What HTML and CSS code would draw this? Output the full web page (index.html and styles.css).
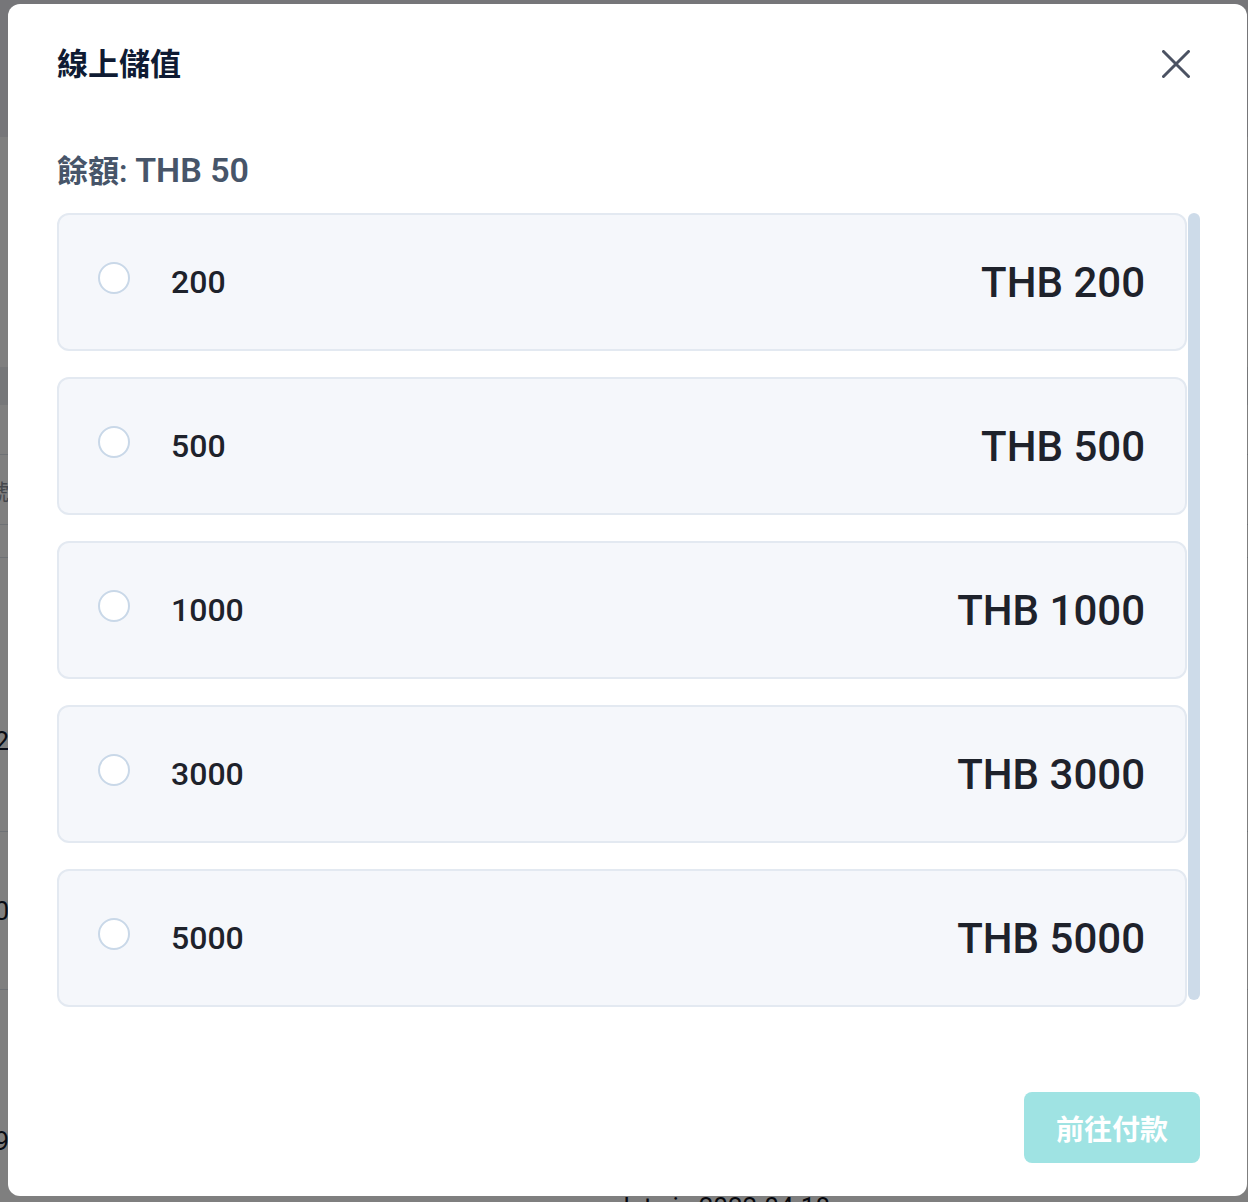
FILE: index.html
```html
<!DOCTYPE html>
<html lang="zh-Hant">
<head>
    <meta charset="UTF-8">
    <title>線上儲值</title>
    <link rel="stylesheet" href="styles.css">
</head>
<body>

<div class="page">
    <div class="page-header"></div>
    <div class="page-space"></div>
    <div class="table-head"></div>
    <div class="row row-filter"></div>
    <div class="row row-input"><span class="cell">號</span></div>
    <div class="row row-thin"></div>
    <div class="row row-a"><span class="cell">2</span></div>
    <div class="row row-b"><span class="cell">0</span></div>
    <div class="row row-c"><span class="cell">9</span></div>
    <div class="row-note">date is 2022-04-18</div>
</div>

<div class="mask"></div>

<div class="dialog">
    <div class="dialog-head">
        <h2>線上儲值</h2>
        <button class="close" type="button">
            <svg width="28" height="28" viewBox="0 0 28 28">
                <path d="M1.5 1.5 L26.5 26.5 M26.5 1.5 L1.5 26.5" stroke="#4b5262" stroke-width="3" stroke-linecap="round" fill="none"/>
            </svg>
        </button>
    </div>

    <div class="balance">餘額: <span class="amount">THB 50</span></div>

    <div class="options">
        <div class="option-list">
            <label class="option"><input type="radio" name="amount"><span class="num">200</span><span class="price">THB 200</span></label>
            <label class="option"><input type="radio" name="amount"><span class="num">500</span><span class="price">THB 500</span></label>
            <label class="option"><input type="radio" name="amount"><span class="num">1000</span><span class="price">THB 1000</span></label>
            <label class="option"><input type="radio" name="amount"><span class="num">3000</span><span class="price">THB 3000</span></label>
            <label class="option"><input type="radio" name="amount"><span class="num">5000</span><span class="price">THB 5000</span></label>
        </div>
        <div class="scrollbar"></div>
    </div>

    <div class="dialog-foot">
        <button class="pay" type="button" disabled>前往付款</button>
    </div>
</div>

</body>
</html>
```

FILE: styles.css
```css
* {
    box-sizing: border-box;
}

html, body {
    margin: 0;
    padding: 0;
}

body {
    width: 1248px;
    height: 1202px;
    overflow: hidden;
    background: #fff;
    font-family: Roboto, "Liberation Sans", "Noto Sans CJK TC", sans-serif;
}

/* page behind the dialog */
.page {
    display: flex;
    flex-direction: column;
}

.page-header {
    height: 137px;
    background: #ecedf3;
}

.page-space {
    height: 230px;
}

.table-head {
    height: 38px;
    background: #eceef2;
}

.row {
    display: flex;
    align-items: center;
    border-bottom: 1px solid #dde3ea;
}

.row .cell {
    width: 9px;
    display: flex;
    justify-content: flex-end;
    white-space: nowrap;
    font-size: 26px;
    color: #101728;
}

.row-filter { height: 50px; }
.row-input { height: 70px; }
.row-input .cell { color: #8a8f99; font-size: 22px; }
.row-thin { height: 33px; }
.row-a { height: 274px; align-items: flex-start; padding-top: 168px; }
.row-b { height: 158px; }
.row-c { height: 158px; align-items: flex-start; padding-top: 136px; border-bottom: 0; }

.row-note {
    margin-top: 44px;
    padding-left: 615px;
    font-size: 26px;
    line-height: 30px;
    color: #0c0f1a;
}

/* overlay */
.mask {
    position: fixed;
    inset: 0;
    background: rgba(0, 0, 0, .5);
}

.dialog {
    position: fixed;
    left: 8px;
    top: 4px;
    width: 1239px;
    height: 1192px;
    background: #fff;
    border-radius: 12px;
    padding: 40px 47px 33px 49px;
    display: flex;
    flex-direction: column;
}

.dialog-head {
    height: 40px;
    display: flex;
    align-items: center;
    justify-content: space-between;
}

.dialog-head h2 {
    margin: 0 0 5px;
    font-size: 31px;
    font-weight: 700;
    color: #0f1b33;
    font-family: "Noto Sans CJK TC", sans-serif;
}

.close {
    width: 28px;
    height: 28px;
    padding: 0;
    margin-right: 10px;
    border: 0;
    background: none;
    cursor: pointer;
    display: flex;
}

.balance {
    margin-top: 68px;
    height: 40px;
    line-height: 40px;
    font-size: 31px;
    font-weight: 600;
    color: #475569;
}

.balance .amount {
    font-size: 34px;
    line-height: 1;
}

.options {
    margin-top: 21px;
    display: flex;
    align-items: flex-start;
}

.option-list {
    width: 1131px;
    display: flex;
    flex-direction: column;
    gap: 26px;
}

.option {
    height: 138px;
    display: flex;
    align-items: center;
    padding: 0 40px 0 39px;
    background: #f5f7fb;
    border: 2px solid #e3e9f1;
    border-radius: 12px;
    cursor: pointer;
}

.option input {
    appearance: none;
    -webkit-appearance: none;
    width: 32px;
    height: 32px;
    margin: 0 41px 8px 0;
    border: 2px solid #c9d8e8;
    border-radius: 50%;
    background: #fff;
}

.option .num {
    font-size: 32px;
    font-weight: 500;
    color: #1e222b;
}

.option .price {
    margin-left: auto;
    font-size: 42px;
    font-weight: 500;
    color: #1e222b;
}

.scrollbar {
    width: 12px;
    height: 787px;
    margin-left: 1px;
    background: #cddbe9;
    border-radius: 6px;
}

.dialog-foot {
    margin-top: auto;
    display: flex;
    justify-content: flex-end;
}

.pay {
    width: 176px;
    height: 71px;
    border: 0;
    border-radius: 8px;
    background: #9fe3e3;
    color: #fff;
    font-size: 28px;
    font-weight: 700;
    font-family: "Noto Sans CJK TC", sans-serif;
}
```
